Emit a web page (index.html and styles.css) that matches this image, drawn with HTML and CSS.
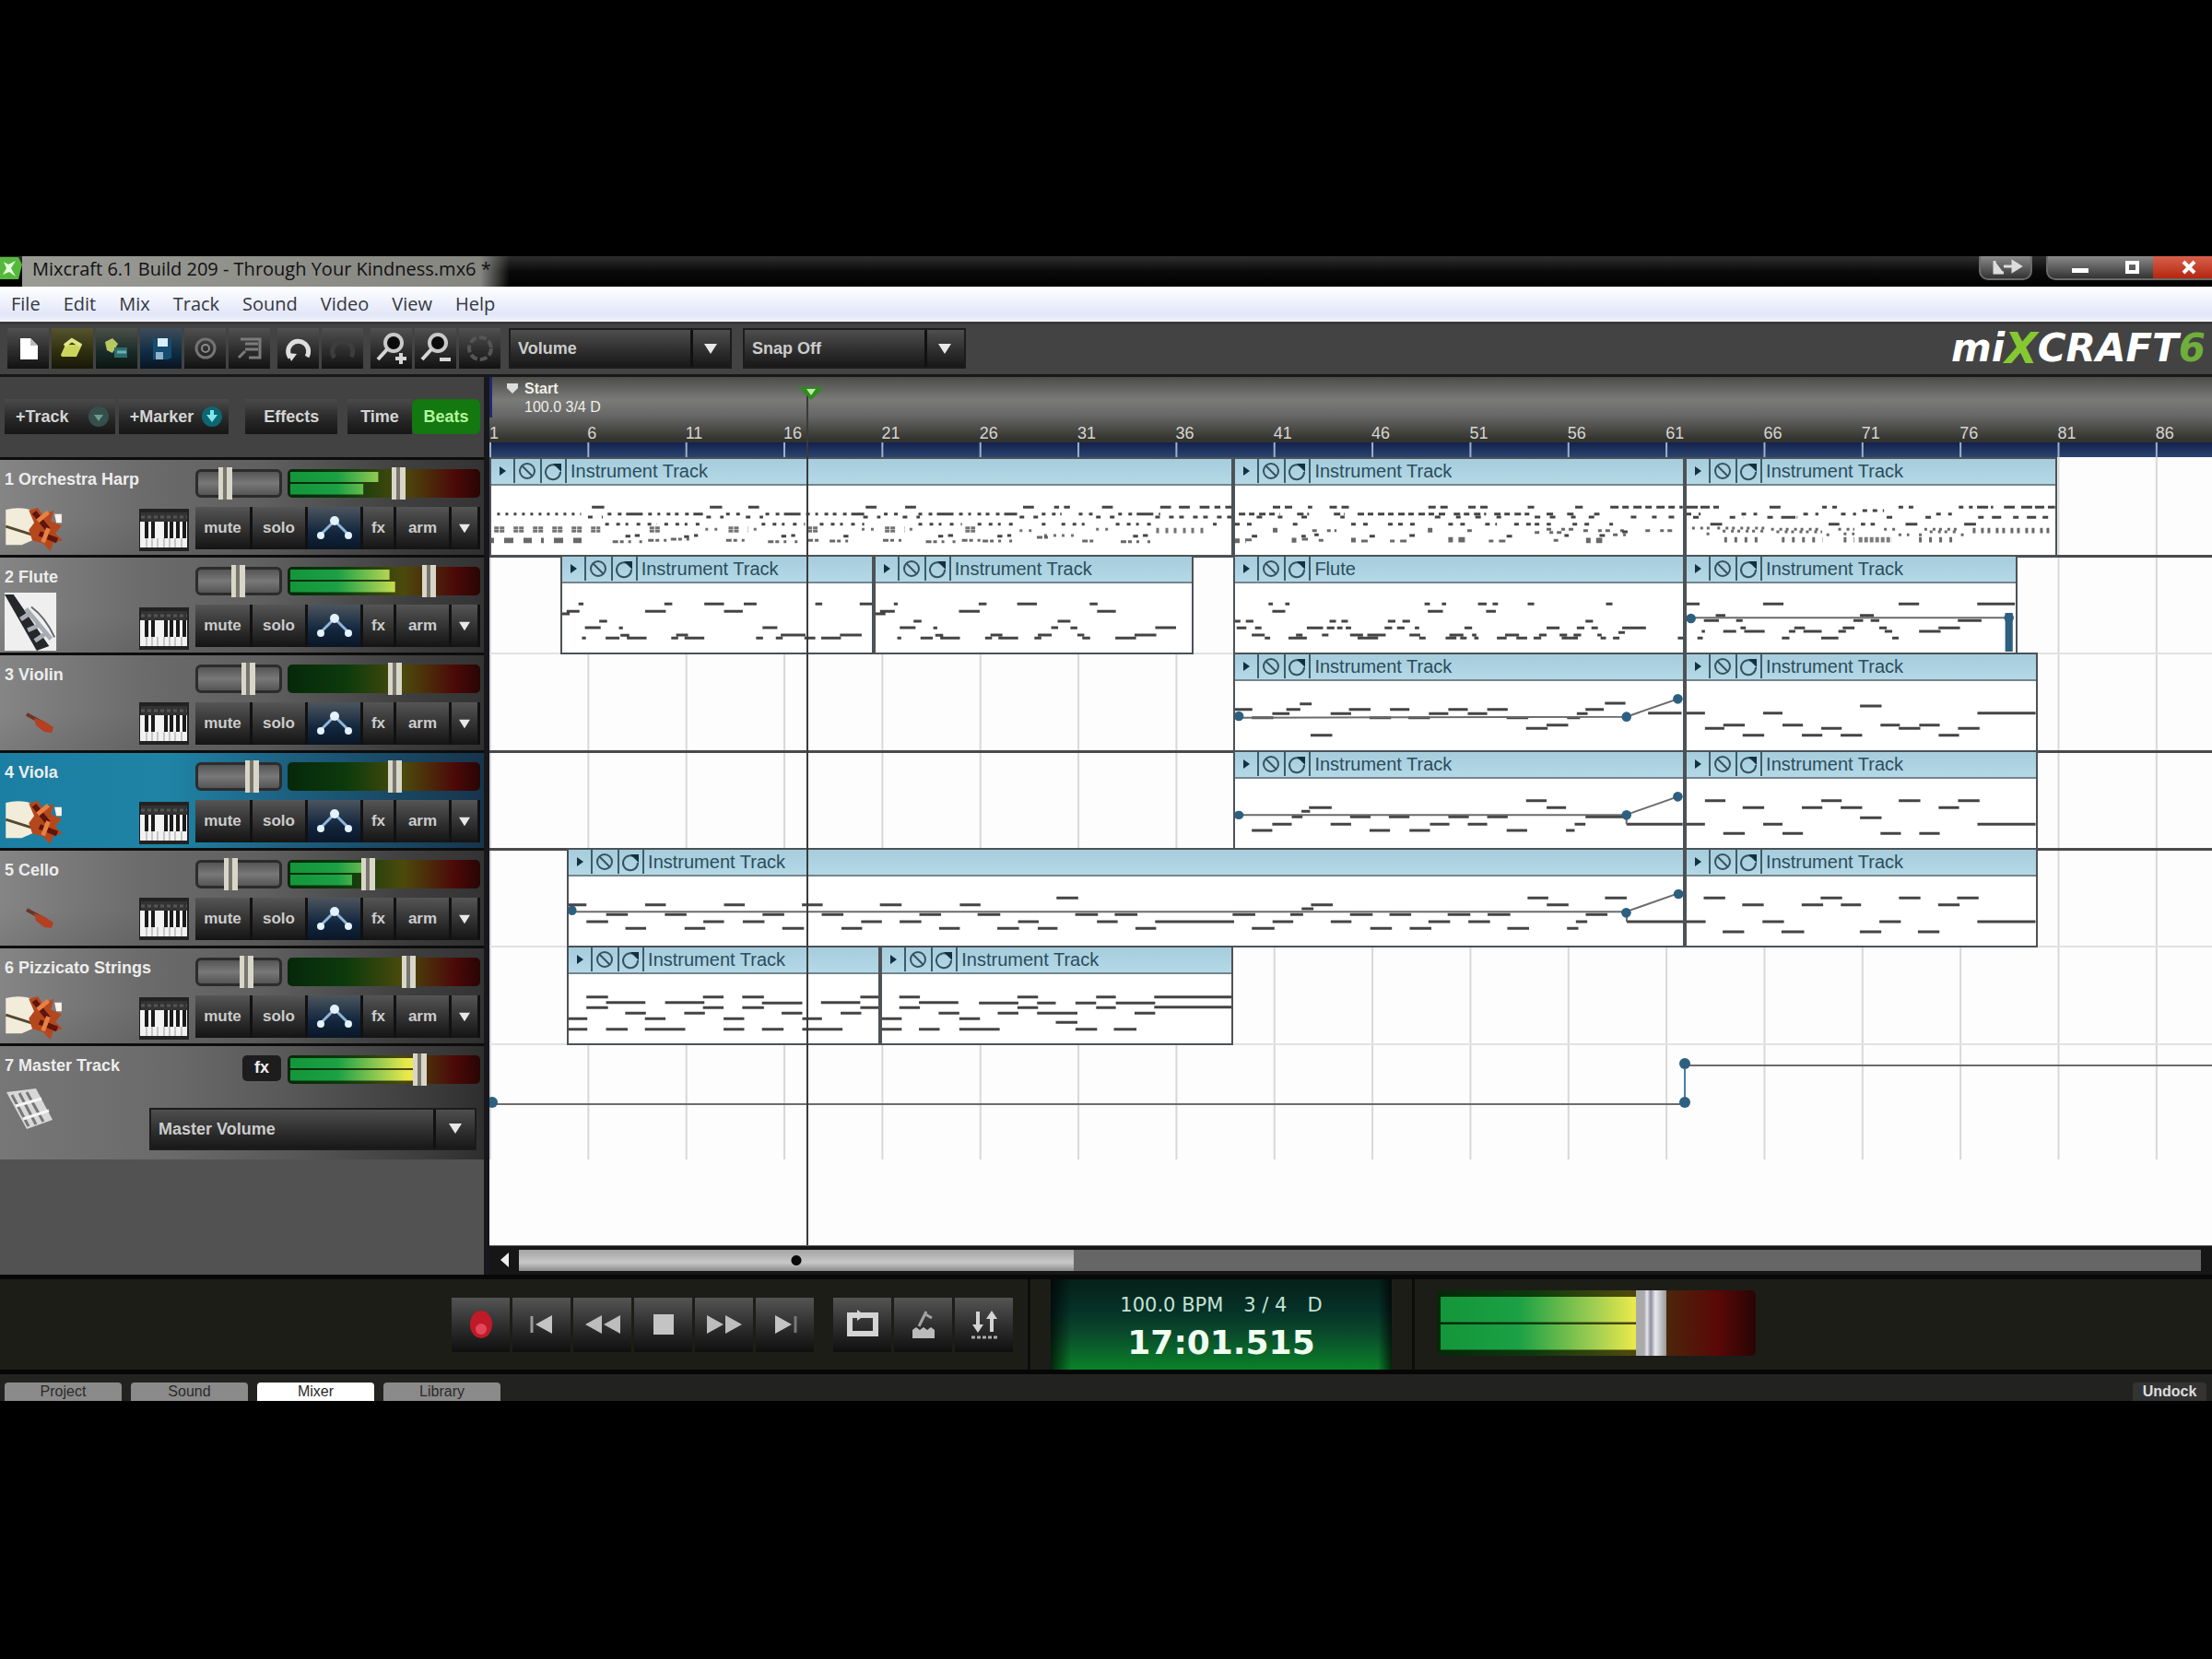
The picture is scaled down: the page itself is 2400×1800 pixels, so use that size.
FILE: index.html
```html
<!DOCTYPE html>
<html lang="en">
<head>
<meta charset="utf-8">
<title>Mixcraft 6.1 Build 209 - Through Your Kindness.mx6</title>
<link rel="stylesheet" href="styles.css">
</head>
<body>
<svg class="defs" aria-hidden="true">
  <defs>
    <symbol id="i-piano" viewBox="0 0 54 46">
      <rect width="54" height="46" fill="#222"/>
      <path d="M1 14h51v28H1z" fill="#f2f2f2"/>
      <path d="M8 14v28M14 32v10M20 32v10M27 32v10M33 32v10M39 32v10M46 32v10" stroke="#999" stroke-width="1"/>
      <path d="M8 12v20M15 12v20M29 12v20M35 12v20M42 12v20M49 12v20" stroke="#1a1a1a" stroke-width="4"/>
      <path d="M2 4h50v10H2z" fill="#333"/>
      <path d="M2 9h50" stroke="#555" stroke-width="3" stroke-dasharray="4 3"/>
    </symbol>
    <symbol id="i-nodes" viewBox="0 0 40 28">
      <path d="M5 21L20 6l15 15" fill="none" stroke="#8fb6da" stroke-width="3"/>
      <circle cx="20" cy="6" r="5" fill="#e4f2ff"/><circle cx="5" cy="22" r="4" fill="#e4f2ff"/><circle cx="35" cy="22" r="4" fill="#e4f2ff"/>
    </symbol>
    <symbol id="i-harp" viewBox="0 0 66 52">
      <path d="M0 3q18-4 32 2l4 30-18 8H0z" fill="#f2eddb"/>
      <path d="M0 22l38 12" stroke="#55482c" stroke-width="3"/>
      <path d="M26 4l10-3 6 9 12-6-3 12 12 5-7 9 8 8-10 2-4 10-8-9-12-3-4-12 6-8z" fill="#b5471d"/>
      <path d="M32 6l16 20M38 30l20 8" stroke="#5d150d" stroke-width="6"/>
      <path d="M36 16l12-10M42 40l6-16" stroke="#e78143" stroke-width="5"/>
      <path d="M55 8h8v10h-6z" fill="#fff2ea"/>
    </symbol>
    <symbol id="i-flute" viewBox="0 0 60 66">
      <path d="M0 0h58v65H0z" fill="#efefef"/>
      <path d="M0 2l10 0 40 58-14 5z" fill="#25272b"/>
      <path d="M24 18l28 34M18 30l12-8M26 42l14-6M34 54l12-8" stroke="#a9adb3" stroke-width="5"/>
      <path d="M30 16q16 12 26 34" stroke="#666" stroke-width="2" fill="none"/>
    </symbol>
    <symbol id="i-bow" viewBox="0 0 34 26">
      <path d="M2 3l22 12" stroke="#6b3527" stroke-width="4"/>
      <path d="M10 7l10 3 11 7-2 6-8-1-9-7z" fill="#b43f22"/>
    </symbol>
    <symbol id="i-desk" viewBox="0 0 54 46">
      <path d="M2 5l32-4 18 34-28 10z" fill="#d8d8d8"/>
      <path d="M8 8l18 34M16 6l18 34M24 5l18 32" stroke="#777" stroke-width="3"/>
      <path d="M12 20l28-8M20 34l28-9" stroke="#f6f6f6" stroke-width="3"/>
    </symbol>
    <symbol id="i-down" viewBox="0 0 16 14"><path d="M1 2h14L8 13z" fill="#e8e8e8"/></symbol>
    <symbol id="i-tools" viewBox="0 0 82 26">
      <path d="M9 8l7 5-7 5z" fill="#12303d"/>
      <path d="M25 0v26M54 0v26M81 0v26" stroke="#3d5c69" stroke-width="2"/>
      <circle cx="39" cy="13" r="8" fill="none" stroke="#36525f" stroke-width="2"/>
      <path d="M33 7l12 12" stroke="#36525f" stroke-width="2"/>
      <path d="M72 8a8 8 0 1 0 3 6" fill="none" stroke="#36525f" stroke-width="2"/>
      <path d="M67 5h9v9z" fill="#12303d"/>
    </symbol>
  </defs>
</svg>

<main class="app">
  <header class="titlebar">
    <svg class="app-icon" viewBox="0 0 24 26" aria-hidden="true"><path d="M0 0h20l4 8-4 16H0z" fill="#55b83c"/><path d="M4 5l5 3 8-4-5 8 5 9-7-5-7 3 4-7z" fill="#e6ffdc"/></svg>
    <h1>Mixcraft 6.1 Build 209 - Through Your Kindness.mx6 *</h1>
    <button class="win-pill" aria-label="Dock"><svg viewBox="0 0 40 18" width="40" height="18"><path d="M8 2v13h10M18 8h10M28 3l8 5-8 5z" stroke="#ddd" stroke-width="3" fill="#ddd"/></svg></button>
    <div class="win-controls">
      <button aria-label="Minimize"><svg viewBox="0 0 20 16" width="20" height="16"><path d="M1 9h18v5H1z" fill="#fff"/></svg></button>
      <button aria-label="Maximize"><svg viewBox="0 0 18 16" width="18" height="16"><path d="M3 3h11v10H3z" fill="none" stroke="#fff" stroke-width="4"/></svg></button>
      <button class="close" aria-label="Close"><svg viewBox="0 0 18 16" width="18" height="16"><path d="M3 2l12 12M15 2L3 14" stroke="#fff" stroke-width="4"/></svg></button>
    </div>
  </header>

  <nav class="menubar" aria-label="Main menu">
    <a href="#file">File</a><a href="#edit">Edit</a><a href="#mix">Mix</a><a href="#track">Track</a><a href="#sound">Sound</a><a href="#video">Video</a><a href="#view">View</a><a href="#help">Help</a>
  </nav>

  <div class="toolbar">
    <div class="tool-group">
      <button aria-label="New"><svg viewBox="0 0 30 30"><path d="M6 4h11l8 8v15H6z" fill="#fff"/><path d="M17 4v8h8" fill="#bbb"/></svg></button>
      <button class="t-olive" aria-label="Open"><svg viewBox="0 0 30 30"><path d="M2 22l5-11h18l-6 13H3z" fill="#cdd65c"/><path d="M6 12l8-6 10 6" fill="none" stroke="#dfe68a" stroke-width="4"/></svg></button>
      <button class="t-green" aria-label="Import"><svg viewBox="0 0 30 30"><path d="M2 8l8-4 6 6-6 10-6-3z" fill="#b9c763"/><path d="M12 14h14v11H12z" fill="#2c6c6d"/><path d="M15 19h10" stroke="#6fb0b5" stroke-width="3"/></svg></button>
      <button class="t-blue" aria-label="Save"><svg viewBox="0 0 30 30"><path d="M6 4h20v21l-4 2H6z" fill="#174c71"/><path d="M11 4h11v9H11z" fill="#d9eefb"/><path d="M9 19h8v8H9z" fill="#8fb4ca"/></svg></button>
      <button aria-label="Burn"><svg viewBox="0 0 30 30"><circle cx="15" cy="15" r="10" fill="none" stroke="#747474" stroke-width="3"/><circle cx="15" cy="15" r="4" fill="none" stroke="#8a8a8a" stroke-width="2"/></svg></button>
      <button aria-label="Mix down"><svg viewBox="0 0 30 30"><path d="M5 5h21v20H14M10 10h14M10 16h14M3 25l7-7" fill="none" stroke="#7b7b7b" stroke-width="3"/></svg></button>
    </div>
    <div class="tool-group">
      <button aria-label="Undo"><svg viewBox="0 0 30 30"><path d="M6 25A11 11 0 1 1 24 24" fill="none" stroke="#dedede" stroke-width="5"/><path d="M3 20l10 1-6 8z" fill="#dedede"/></svg></button>
      <button aria-label="Redo"><svg viewBox="0 0 30 30"><path d="M6 25A11 11 0 1 1 24 24" fill="none" stroke="#3d3d3d" stroke-width="5"/></svg></button>
    </div>
    <div class="tool-group zooms">
      <button aria-label="Zoom in"><svg viewBox="0 0 36 36"><circle cx="20" cy="12" r="9" fill="#0c0c0c" stroke="#c9c9c9" stroke-width="4"/><path d="M13 19L3 30M22 29h12M28 23v12" stroke="#d6d6d6" stroke-width="4"/></svg></button>
      <button aria-label="Zoom out"><svg viewBox="0 0 36 36"><circle cx="20" cy="12" r="9" fill="#0c0c0c" stroke="#c9c9c9" stroke-width="4"/><path d="M13 19L3 30M22 30h12" stroke="#d6d6d6" stroke-width="4"/></svg></button>
      <button aria-label="Preferences"><svg viewBox="0 0 36 36"><circle cx="18" cy="18" r="12" fill="none" stroke="#555" stroke-width="4" stroke-dasharray="8 3"/></svg></button>
    </div>
    <label class="combo"><select aria-label="Automation"><option>Volume</option></select><svg><use href="#i-down"/></svg></label>
    <label class="combo"><select aria-label="Snap"><option>Snap Off</option></select><svg><use href="#i-down"/></svg></label>
    <div class="logo" role="img" aria-label="Mixcraft 6"><span>mi</span><b>X</b><span>CRAFT</span><i>6</i></div>
  </div>

  <div class="workspace">
    <aside class="panel">
      <div class="panel-tools">
        <button class="add dim">+Track <svg viewBox="0 0 24 24"><circle cx="12" cy="12" r="11" fill="#35504c"/><path d="M7 10h10l-5 7z" fill="#6f9b92"/></svg></button>
        <button class="add">+Marker <svg viewBox="0 0 24 24"><circle cx="12" cy="12" r="11" fill="#0d6670"/><path d="M10 5h4v5h4l-6 8-6-8h4z" fill="#7fe6ec"/></svg></button>
        <button class="effects">Effects</button>
        <div class="toggle"><button>Time</button><button class="on">Beats</button></div>
      </div>

      <section class="track">
        <h2>1 Orchestra Harp</h2>
        <input class="pan" type="range" value="30" aria-label="Pan, track 1">
        <div class="meter"><i style="--level:47%"></i><i style="--level:39%"></i><input type="range" value="58" aria-label="Volume, track 1"></div>
        <svg class="pic"><use href="#i-harp"/></svg>
        <button class="piano" aria-label="Instrument"><svg><use href="#i-piano"/></svg></button>
        <div class="strip"><button>mute</button><button>solo</button><button class="auto" aria-label="Automation"><svg><use href="#i-nodes"/></svg></button><button>fx</button><button>arm</button><button aria-label="More"><svg class="sm"><use href="#i-down"/></svg></button></div>
      </section>
      <section class="track">
        <h2>2 Flute</h2>
        <input class="pan" type="range" value="49" aria-label="Pan, track 2">
        <div class="meter"><i style="--level:53%"></i><i style="--level:56%"></i><input type="range" value="75" aria-label="Volume, track 2"></div>
        <svg class="pic flute"><use href="#i-flute"/></svg>
        <button class="piano" aria-label="Instrument"><svg><use href="#i-piano"/></svg></button>
        <div class="strip"><button>mute</button><button>solo</button><button class="auto" aria-label="Automation"><svg><use href="#i-nodes"/></svg></button><button>fx</button><button>arm</button><button aria-label="More"><svg class="sm"><use href="#i-down"/></svg></button></div>
      </section>
      <section class="track">
        <h2>3 Violin</h2>
        <input class="pan" type="range" value="64" aria-label="Pan, track 3">
        <div class="meter"><i style="--level:0%"></i><i style="--level:0%"></i><input type="range" value="56" aria-label="Volume, track 3"></div>
        <svg class="pic bow"><use href="#i-bow"/></svg>
        <button class="piano" aria-label="Instrument"><svg><use href="#i-piano"/></svg></button>
        <div class="strip"><button>mute</button><button>solo</button><button class="auto" aria-label="Automation"><svg><use href="#i-nodes"/></svg></button><button>fx</button><button>arm</button><button aria-label="More"><svg class="sm"><use href="#i-down"/></svg></button></div>
      </section>
      <section class="track selected">
        <h2>4 Viola</h2>
        <input class="pan" type="range" value="70" aria-label="Pan, track 4">
        <div class="meter"><i style="--level:0%"></i><i style="--level:0%"></i><input type="range" value="56" aria-label="Volume, track 4"></div>
        <svg class="pic"><use href="#i-harp"/></svg>
        <button class="piano" aria-label="Instrument"><svg><use href="#i-piano"/></svg></button>
        <div class="strip"><button>mute</button><button>solo</button><button class="auto" aria-label="Automation"><svg><use href="#i-nodes"/></svg></button><button>fx</button><button>arm</button><button aria-label="More"><svg class="sm"><use href="#i-down"/></svg></button></div>
      </section>
      <section class="track">
        <h2>5 Cello</h2>
        <input class="pan" type="range" value="38" aria-label="Pan, track 5">
        <div class="meter"><i style="--level:40%"></i><i style="--level:33%"></i><input type="range" value="41" aria-label="Volume, track 5"></div>
        <svg class="pic bow"><use href="#i-bow"/></svg>
        <button class="piano" aria-label="Instrument"><svg><use href="#i-piano"/></svg></button>
        <div class="strip"><button>mute</button><button>solo</button><button class="auto" aria-label="Automation"><svg><use href="#i-nodes"/></svg></button><button>fx</button><button>arm</button><button aria-label="More"><svg class="sm"><use href="#i-down"/></svg></button></div>
      </section>
      <section class="track">
        <h2>6 Pizzicato Strings</h2>
        <input class="pan" type="range" value="61" aria-label="Pan, track 6">
        <div class="meter"><i style="--level:0%"></i><i style="--level:0%"></i><input type="range" value="64" aria-label="Volume, track 6"></div>
        <svg class="pic"><use href="#i-harp"/></svg>
        <button class="piano" aria-label="Instrument"><svg><use href="#i-piano"/></svg></button>
        <div class="strip"><button>mute</button><button>solo</button><button class="auto" aria-label="Automation"><svg><use href="#i-nodes"/></svg></button><button>fx</button><button>arm</button><button aria-label="More"><svg class="sm"><use href="#i-down"/></svg></button></div>
      </section>
      <section class="track master">
        <h2>7 Master Track</h2>
        <button class="fx">fx</button>
        <div class="meter"><i style="--level:66%"></i><i style="--level:66%"></i><input type="range" value="70" aria-label="Master volume"></div>
        <svg class="pic desk"><use href="#i-desk"/></svg>
        <label class="combo"><select aria-label="Master automation"><option>Master Volume</option></select><svg><use href="#i-down"/></svg></label>
      </section>
    </aside>

    <section class="timeline">
      <div class="ruler">
        <div class="marker"><svg viewBox="0 0 14 14"><path d="M1 2h12v5L7 13 1 7z" fill="#ddd"/></svg><p><b>Start</b><br>100.0 3/4 D</p></div>
        <ol class="bars"><li>1</li><li>6</li><li>11</li><li>16</li><li>21</li><li>26</li><li>31</li><li>36</li><li>41</li><li>46</li><li>51</li><li>56</li><li>61</li><li>66</li><li>71</li><li>76</li><li>81</li><li>86</li></ol>
      </div>
      <div class="ticks"></div>

      <div class="lanes">
        <div class="lane dark">
          <article class="clip" style="left:0%;width:43.2%"><h3><svg><use href="#i-tools"/></svg>Instrument Track</h3>
            <svg class="notes" viewBox="24 138 1501 222" preserveAspectRatio="none">
              <path d="M228 208h25M467 208h25M545 208h22M783 208h22M863 208h22M1102 208h22M1165 208h10M1185 208h12M1262 208h22M1380 208h22M1418 208h22M1460 208h20M1490 208h12M1512 208h14"/>
              <path stroke-dasharray="3 6" d="M36 230h170"/>
              <path stroke-dasharray="4 7 4 5 18 6 4 6 3 7 4 5" d="M260 230h193M500 230h30M580 230h200M820 230h30M890 230h200M1140 230h40M1215 230h35M1295 230h85"/>
              <path stroke-dasharray="5 10 5 6" d="M220 240h30M460 240h35M540 240h35M778 240h35M858 240h35M1095 240h40M1250 240h40M1370 240h155"/>
              <path stroke-dasharray="4 8 4 6 3 9" d="M255 263h105M375 263h85M572 263h88M690 263h90M890 263h88M1010 263h85M1140 263h20M1180 263h60M1290 263h85M1487 263h8"/>
              <path stroke-dasharray="5 1 5 10" stroke-opacity=".75" d="M30 275h215M30 286h215M345 275h26M345 286h26M505 275h40M505 286h40M665 275h25M665 286h25M822 275h40M822 286h40M985 275h20M985 286h20"/>
              <path stroke-dasharray="3 7 3 6" stroke-opacity=".75" d="M458 280h30M556 280h8M775 280h28M872 280h10M1095 284h30M1145 300h70M1250 280h30M1372 280h105M1372 288h105"/>
              <path stroke-dasharray="3 11 10 11 9 10" stroke-opacity=".8" d="M24 312h195M24 320h195"/>
              <path stroke-dasharray="6 2 4 5 3 9 3 6" stroke-opacity=".8" d="M270 320h60M342 316h50M388 312h50M500 316h38M585 320h60M665 316h30M710 318h50M818 316h38M905 320h60M978 316h50M1020 318h60M1130 306h30M1222 318h26M1300 320h60"/>
              <path d="M296 302h10M315 300h10M415 304h10M435 300h8M612 302h10M632 300h8M738 302h10M930 302h10M950 300h10M1050 302h10M1070 300h8M1325 302h10M1345 300h10"/>
            </svg></article>
          <article class="clip" style="left:43.2%;width:26.2%"><h3><svg><use href="#i-tools"/></svg>Instrument Track</h3>
            <svg class="notes" viewBox="35 138 829 222" preserveAspectRatio="none">
              <path stroke-dasharray="8 5 8 24" d="M105 208h38M210 208h40M393 208h38M467 208h38"/>
              <path d="M170 208h8M577 208h12M665 208h14"/>
              <path stroke-dasharray="9 4 7 5" d="M730 208h134"/>
              <path stroke-dasharray="7 4 6 5" d="M42 230h76M150 230h22M218 230h20M262 230h165M440 230h60M515 230h65M612 230h12M650 230h14M700 230h10"/>
              <path stroke-dasharray="6 17 5 13" d="M75 240h50M158 240h12M230 240h8M405 240h60M480 240h50M590 240h12M618 240h60M690 240h14M768 240h95"/>
              <path stroke-dasharray="5 8 5 22 5 6" d="M35 263h55M142 263h10M250 263h130M430 263h90M552 263h60M590 263h30M660 263h75"/>
              <path stroke-dasharray="5 11 4 4" stroke-opacity=".8" d="M105 280h10M178 284h45M392 280h14M465 284h20M590 290h60M612 280h60M680 284h80M795 284h50M105 286h10M392 286h14"/>
              <path stroke-dasharray="5 6 7 22" stroke-opacity=".8" d="M35 314h40M35 320h20M140 312h30M140 319h14M190 316h14M250 318h45M250 312h10M322 318h45M430 310h38M430 318h38M505 318h40M625 316h14M685 312h30M685 320h30M735 298h24"/>
              <path d="M66 302h10M158 302h8M182 298h8M284 302h10M358 300h10M538 302h10M645 300h8M710 300h10M752 288h10"/>
            </svg></article>
          <article class="clip" style="left:69.4%;width:21.6%"><h3><svg><use href="#i-tools"/></svg>Instrument Track</h3>
            <svg class="notes" viewBox="868 138 685 222" preserveAspectRatio="none">
              <path stroke-dasharray="12 3 10 4" d="M868 208h60M1022 208h22M1408 208h30M1458 208h20M1490 208h63"/>
              <path stroke-dasharray="5 6" d="M1120 208h28M1262 208h30M1374 208h26M1195 219h40"/>
              <path stroke-dasharray="5 8 4 5" d="M868 230h26M970 230h34M1085 230h28M1155 230h28M1332 230h30"/>
              <path stroke-dasharray="6 9 10 7" d="M880 241h24M948 241h26M1018 241h56M1060 241h20M1240 241h24M1312 241h24M1410 241h50M1475 241h78"/>
              <path d="M912 263h22M1132 263h20M1192 263h8M1210 263h8M1275 263h22M1384 263h22"/>
              <path stroke-dasharray="3 6 3 4" stroke-opacity=".8" d="M878 276h36M925 276h90M935 286h80M1025 280h95M1035 288h85M1150 280h30M1235 280h26M1310 280h60M1320 288h50M1400 280h152M1400 288h152M905 295h10M1128 298h12M1160 295h20M1262 298h20M1300 298h12M1378 298h12"/>
              <path stroke-dasharray="3 8" stroke-opacity=".8" d="M938 310h74M938 318h74M1045 310h76M1045 318h76M1160 310h20M1160 318h20M1300 310h74M1300 318h74"/>
              <path stroke-opacity=".7" stroke-dasharray="4 2" d="M1188 310h62M1188 318h62"/>
            </svg></article>
        </div>

        <div class="lane">
          <article class="clip" style="left:4.1%;width:18.2%"><h3><svg><use href="#i-tools"/></svg>Instrument Track</h3>
            <svg class="notes" viewBox="167 456 628 222" preserveAspectRatio="none"><path d="M166 555h16M176 547h26M200 523h10M207 634h8M213 600h32M242 579h16M255 634h28M282 601h8M285 625h18M298 634h40M335 547h42M374 523h16M388 634h14M398 624h24M415 634h40M455 523h40M495 547h38M535 523h26M560 634h14M573 600h30M600 634h14M610 624h50M658 634h22M692 634h40M730 624h44M680 523h14M770 523h25"/></svg></article>
          <article class="clip" style="left:22.3%;width:18.6%"><h3><svg><use href="#i-tools"/></svg>Instrument Track</h3>
            <svg class="notes" viewBox="801 456 642 222" preserveAspectRatio="none"><path d="M801 555h20M810 547h30M838 523h8M845 634h8M850 600h32M878 579h16M892 634h25M918 601h8M922 625h16M932 634h40M970 547h42M1010 523h16M1023 634h14M1034 624h24M1050 634h40M1088 523h40M1123 634h14M1130 624h28M1157 600h14M1170 579h26M1196 601h14M1210 624h14M1220 634h16M1235 523h16M1250 547h38M1287 634h42M1326 624h44M1368 600h42"/></svg></article>
          <article class="clip" style="left:43.2%;width:26.2%"><h3><svg><use href="#i-tools"/></svg>Flute</h3>
            <svg class="notes" viewBox="35 456 829 222" preserveAspectRatio="none"><path d="M35 579h10M55 579h14M38 601h18M72 601h12M66 624h24M90 634h10M97 523h8M104 547h24M128 523h8M134 634h34M148 624h12M168 601h30M196 624h12M210 579h12M232 579h12M205 601h14M224 601h10M240 601h10M248 624h24M262 634h38M280 624h24M300 624h14M312 601h14M318 579h14M345 579h14M335 601h14M368 601h8M358 624h20M376 634h12M386 523h10M392 547h28M418 523h8M425 634h20M432 624h26M460 601h14M452 634h12M474 624h8M478 634h8M485 523h16M512 523h10M500 547h18M520 634h18M535 624h26M556 634h20M577 523h12M588 634h14M598 624h14M612 601h24M636 624h14M640 634h30M662 624h14M668 601h14M684 579h14M695 601h12M706 624h8M712 634h10M722 523h12M735 634h12M745 616h12M752 601h44M855 634h10"/></svg></article>
          <article class="clip" style="left:69.4%;width:19.3%"><h3><svg><use href="#i-tools"/></svg>Instrument Track</h3>
            <svg class="notes" viewBox="868 456 611 222" preserveAspectRatio="none"><path d="M868 523h24M1010 523h38M1262 523h38M1408 523h70M888 634h10M896 612h6M900 577h28M922 560h18M960 577h12M936 612h24M968 601h10M975 612h38M1045 634h14M1058 612h12M1068 601h20M1085 612h34M1118 634h32M1150 612h14M1158 601h22M1178 577h18M1190 560h26M1210 577h16M1226 601h14M1236 612h14M1250 634h12M1300 612h40M1336 601h40M1372 577h44"/><path class="env" d="M875 568H1468"/><path d="M1460 552h14v126h-14z" class="dot"/><ellipse class="dot" cx="876" cy="570" rx="9" ry="16"/><ellipse class="dot" cx="1467" cy="568" rx="9" ry="16"/></svg></article>
        </div>

        <div class="lane dark">
          <article class="clip" style="left:43.2%;width:26.2%"><h3><svg><use href="#i-tools"/></svg>Instrument Track</h3>
            <svg class="notes" viewBox="35 774 829 222" preserveAspectRatio="none"><path d="M35 866h32M66 893h40M104 880h32M130 866h26M155 848h22M175 950h40M212 880h38M246 866h40M284 893h40M322 866h36M356 893h40M394 880h36M430 866h36M466 880h36M502 866h38M538 893h40M574 928h40M612 917h40M650 893h24M668 880h20M684 866h34M720 846h38M800 878h62"/><path class="env" d="M40 893L760 890L855 832"/><ellipse class="dot" cx="42" cy="888" rx="9" ry="16"/><ellipse class="dot" cx="760" cy="890" rx="9" ry="16"/><ellipse class="dot" cx="855" cy="832" rx="9" ry="16"/></svg></article>
          <article class="clip" style="left:69.4%;width:20.5%"><h3><svg><use href="#i-tools"/></svg>Instrument Track</h3>
            <svg class="notes" viewBox="868 774 649 222" preserveAspectRatio="none"><path d="M868 878h34M1010 878h36M1190 855h40M1408 878h108M902 928h36M936 917h40M972 950h40M1046 917h38M1082 950h38M1118 928h38M1154 950h40M1228 917h36M1262 928h40M1300 917h38M1336 950h38M1372 928h40"/></svg></article>
        </div>

        <div class="lane dark">
          <article class="clip" style="left:43.2%;width:26.2%"><h3><svg><use href="#i-tools"/></svg>Instrument Track</h3>
            <svg class="notes" viewBox="35 1092 829 222" preserveAspectRatio="none"><path d="M66 1260h38M104 1240h36M140 1216h20M158 1198h16M172 1186h42M212 1240h38M248 1216h38M284 1260h38M320 1216h38M358 1260h38M396 1240h36M430 1216h38M466 1240h36M502 1216h38M538 1260h38M574 1163h38M612 1186h36M648 1260h16M664 1240h20M684 1216h74M760 1240h104"/><path class="env" d="M40 1210H758L855 1150M760 1210v30"/><ellipse class="dot" cx="42" cy="1210" rx="9" ry="14"/><ellipse class="dot" cx="760" cy="1210" rx="9" ry="16"/><ellipse class="dot" cx="855" cy="1150" rx="9" ry="16"/></svg></article>
          <article class="clip" style="left:69.4%;width:20.5%"><h3><svg><use href="#i-tools"/></svg>Instrument Track</h3>
            <svg class="notes" viewBox="868 1092 649 222" preserveAspectRatio="none"><path d="M868 1240h34M902 1163h38M936 1270h40M972 1186h40M1010 1240h36M1046 1270h38M1082 1186h38M1118 1163h38M1154 1186h40M1190 1219h40M1228 1270h38M1262 1163h40M1300 1270h38M1336 1186h38M1372 1163h40M1408 1240h108"/></svg></article>
        </div>

        <div class="lane">
          <article class="clip" style="left:4.5%;width:64.9%"><h3><svg><use href="#i-tools"/></svg>Instrument Track</h3>
            <svg class="notes" viewBox="179 150 2259 222" preserveAspectRatio="none"><path d="M179 242h36M215 297h44M255 274h44M294 319h42M334 242h42M374 274h44M414 319h42M452 297h42M494 242h42M532 297h44M572 274h44M612 319h44M652 242h42M692 274h44M732 319h42M772 297h42M810 242h44M850 297h44M890 274h44M930 319h42M972 242h42M1008 274h46M1048 319h44M1090 297h42M1130 319h40M1168 220h44M1206 274h46M1250 297h42M1286 274h46M1328 319h42M1368 297h160M1525 274h46M1564 319h46M1606 297h42M1642 274h26M1665 255h24M1684 242h44M1724 297h42M1763 274h46M1804 319h44M1843 274h44M1884 319h44M1922 297h44M1961 274h46M2003 297h44M2042 274h46M2082 319h44M2123 220h42M2162 242h44M2203 319h23M2221 297h23M2241 274h44M2280 220h44M2324 297h114"/><path class="env" d="M185 265H2322L2428 205M2324 265v32"/><ellipse class="dot" cx="186" cy="260" rx="9" ry="16"/><ellipse class="dot" cx="2323" cy="268" rx="10" ry="16"/><ellipse class="dot" cx="2429" cy="207" rx="10" ry="16"/></svg></article>
          <article class="clip" style="left:69.4%;width:20.5%"><h3><svg><use href="#i-tools"/></svg>Instrument Track</h3>
            <svg class="notes" viewBox="740 150 553 222" preserveAspectRatio="none"><path d="M740 297h30M767 220h34M797 330h34M828 242h34M860 297h34M890 330h36M922 242h34M952 220h34M984 242h32M1014 330h34M1045 297h34M1076 220h34M1106 330h34M1138 242h34M1168 220h34M1200 297h92"/></svg></article>
        </div>

        <div class="lane">
          <article class="clip" style="left:4.5%;width:18.2%"><h3><svg><use href="#i-tools"/></svg>Instrument Track</h3>
            <svg class="notes" viewBox="179 468 630 222" preserveAspectRatio="none"><path d="M215 542h44M215 577h44M255 560h80M375 560h80M452 542h42M452 577h42M532 542h44M532 577h44M572 562h82M692 560h80M772 542h40M772 577h40M294 595h42M414 595h42M612 595h42M732 595h42M179 613h38M334 613h42M494 613h42M654 613h40M179 647h38M255 647h44M334 647h82M494 647h42M572 647h44M654 647h82"/></svg></article>
          <article class="clip" style="left:22.7%;width:20.5%"><h3><svg><use href="#i-tools"/></svg>Instrument Track</h3>
            <svg class="notes" viewBox="815 468 710 222" preserveAspectRatio="none"><path d="M815 613h40M815 647h40M850 542h42M850 577h42M890 560h80M930 595h42M890 647h42M972 613h42M972 647h82M1012 562h80M1050 595h42M1090 542h42M1090 577h42M1130 562h38M1130 595h82M1168 625h44M1208 562h42M1208 647h44M1250 542h40M1250 577h40M1290 562h80M1286 647h46M1328 595h42M1368 542h158M1368 575h158"/></svg></article>
        </div>

        <div class="lane master-lane">
          <svg class="master-env" viewBox="0 0 1869 126" preserveAspectRatio="none"><path class="env" d="M0 66H1297M1297 24H1869"/><path class="link" d="M1297 24v42"/><ellipse class="dot" cx="3" cy="64" rx="6" ry="6"/><ellipse class="dot" cx="1297" cy="64" rx="6" ry="6"/><ellipse class="dot" cx="1297" cy="22" rx="6" ry="6"/></svg>
        </div>
      </div>
      <div class="blank"></div>
      <div class="scroll">
        <button aria-label="Scroll left"><svg viewBox="0 0 12 18"><path d="M11 1v16L2 9z" fill="#eee"/></svg></button>
        <div class="rail"><div class="thumb"></div></div>
      </div>
      <div class="playhead"><svg viewBox="0 0 30 18"><path d="M1 3h28L15 17z" fill="#2f8a22"/><path d="M10 5h10l-5 7z" fill="#b9ef9c"/></svg></div>
    </section>
  </div>

  <footer class="transport">
    <div class="decks">
      <div class="keys">
        <button aria-label="Record"><svg viewBox="0 0 30 32"><ellipse cx="15" cy="16" rx="12" ry="15" fill="#c01a28"/><ellipse cx="15" cy="21" rx="6" ry="6" fill="#e0485a"/></svg></button>
        <button aria-label="To start"><svg viewBox="0 0 30 24"><path d="M4 3v18" stroke="#999" stroke-width="3"/><path d="M26 2v20L8 12z" fill="#c4c4c4"/></svg></button>
        <button aria-label="Rewind"><svg class="w" viewBox="0 0 42 24"><path d="M20 2v20L2 12zM40 2v20L22 12z" fill="#bdbdbd"/></svg></button>
        <button aria-label="Stop"><svg viewBox="0 0 30 24"><path d="M4 1h22v22H4z" fill="#c4c4c4"/></svg></button>
        <button aria-label="Forward"><svg class="w" viewBox="0 0 42 24"><path d="M2 2v20l18-10zM22 2v20l18-10z" fill="#bdbdbd"/></svg></button>
        <button aria-label="To end"><svg viewBox="0 0 30 24"><path d="M4 2v20l18-10z" fill="#c4c4c4"/><path d="M26 3v18" stroke="#777" stroke-width="3"/></svg></button>
      </div>
      <div class="keys">
        <button aria-label="Loop"><svg class="w" viewBox="0 0 42 32"><path d="M7 6h28v20H7z" fill="none" stroke="#d4d4d4" stroke-width="6"/><path d="M15 0l8 6-8 6z" fill="#d4d4d4"/></svg></button>
        <button aria-label="Metronome"><svg viewBox="0 0 30 32"><path d="M3 31v-9l4-3 4 3 4-3 4 3 4-3 4 3v9z" fill="#bbb"/><path d="M10 18L18 2M17 5l7 4" stroke="#a2a2a2" stroke-width="3"/></svg></button>
        <button aria-label="Punch"><svg viewBox="0 0 30 32"><path d="M8 2v16M23 24V8" stroke="#d4d4d4" stroke-width="4"/><path d="M2 16h12L8 25zM17 10h12L23 1z" fill="#d4d4d4"/><path d="M1 30h28" stroke="#aaa" stroke-width="3" stroke-dasharray="4 2"/></svg></button>
      </div>
    </div>
    <div class="lcd"><p class="tempo"><span>100.0 BPM</span><span>3 / 4</span><span>D</span></p><p class="clock">17:01.515</p></div>
    <div class="main-meter"><div class="meter big"><i style="--level:65%"></i><i style="--level:65%"></i><input type="range" value="69" aria-label="Output level"></div></div>
  </footer>

  <nav class="tabs" aria-label="Panels">
    <button>Project</button><button>Sound</button><button class="on">Mixer</button><button>Library</button>
    <button class="undock">Undock</button>
  </nav>
</main>
</body>
</html>
```
FILE: styles.css
```css
* { box-sizing: border-box; margin: 0; padding: 0; }
body {
  min-height: 100vh;
  display: flex;
  flex-direction: column;
  justify-content: center;
  padding-bottom: 3px;
  background: #000;
  color: #eee;
  font-family: "Liberation Sans", Arial, sans-serif;
  font-size: 18px;
}
button, select, input { font: inherit; color: inherit; border: 0; background: none; }
h1, h2, h3 { font-size: inherit; font-weight: normal; }
a { color: inherit; text-decoration: none; }
svg { display: block; }
.defs { position: absolute; width: 0; height: 0; }
.app { width: 100%; overflow: hidden; }

/* window frame */
.titlebar {
  height: 33px;
  display: flex;
  align-items: flex-start;
  background: linear-gradient(#2e2e2e, #0a0a0a 50%, #000);
  font-family: "Open Sans", sans-serif;
  font-size: 20px;
  color: #111;
}
.app-icon { width: 24px; height: 28px; }
.titlebar h1 {
  height: 33px;
  line-height: 28px;
  padding: 0 20px 0 11px;
  margin-right: auto;
  background: linear-gradient(90deg, #9b9b96, #868681 94%, transparent);
  white-space: nowrap;
}
.win-pill, .win-controls { height: 26px; border-radius: 0 0 10px 10px; background: linear-gradient(#8a8a8a, #333); border: 2px solid #6a6a6a; border-top: 0; }
.win-pill { width: 58px; margin-right: 15px; display: grid; place-items: center; }
.win-controls { width: 180px; display: flex; border-right: 0; border-bottom-right-radius: 0; }
.win-controls button { width: 44px; display: grid; place-items: center; }
.win-controls button:first-child { width: 70px; }
.win-controls .close { flex: 1; background: linear-gradient(#d8604c, #b5260f); }
.win-controls .close svg { margin-left: 14px; }
.menubar {
  height: 38px;
  display: flex;
  gap: 1px;
  align-items: center;
  background: linear-gradient(#fff, #f0f3fd 40%, #e2e6f7 80%, #f2f4fc);
  color: #34383f;
  font: 20px "Open Sans", sans-serif;
}
.menubar a { padding: 0 12px; }

/* toolbar */
.toolbar {
  height: 60px;
  display: flex;
  align-items: center;
  padding: 0 7px 2px 8px;
  background: #434343;
  border-top: 3px solid #383838;
  border-bottom: 3px solid #181818;
}
.tool-group { display: flex; gap: 3px; margin-right: 8px; }
.tool-group:nth-child(2) { margin-right: 8px; }
.tool-group.zooms { margin-right: 9px; }
.tool-group button { width: 45px; height: 44px; display: grid; place-items: center; background: linear-gradient(#505050, #2a2a2a 60%, #121212); }
.tool-group svg { width: 30px; height: 30px; }
.zooms svg { width: 38px; height: 36px; }
.tool-group .t-olive { background: linear-gradient(#54542e, #2e2e0c 60%, #17170a); }
.tool-group .t-green { background: linear-gradient(#4c504a, #182a26 60%, #0c1410); }
.tool-group .t-blue { background: linear-gradient(#3e4d5a, #0e2c44 60%, #0a1420); }
.combo { position: relative; display: block; width: 242px; height: 44px; margin-right: 12px; }
.combo select {
  appearance: none;
  width: 100%;
  height: 100%;
  padding: 0 8px;
  background: linear-gradient(90deg, transparent 195px, #111 195px, #111 198px, transparent 198px), linear-gradient(#4e4e4e, #2c2c2c 60%, #181818);
  border: 2px solid #1c1c1c;
  font-weight: bold;
  color: #ccc;
}
.combo svg { position: absolute; right: 15px; top: 15px; width: 16px; height: 14px; pointer-events: none; }
.logo { margin-left: auto; display: flex; align-items: center; font: italic bold 42px/46px "DejaVu Sans", sans-serif; color: #fff; }
.logo b { color: #86c832; font-size: 46px; }
.logo i { color: #6fae3a; }

/* layout of tracks and timeline */
.workspace { display: grid; grid-template-columns: 531px 1fr; border-bottom: 5px solid #080808; }
.panel { background: #525252; border-right: 6px solid #17171c; }
.panel-tools { height: 87px; display: flex; align-items: center; padding: 0 0 0 5px; background: #424242; font-weight: bold; }
.panel-tools > * { height: 38px; margin-right: 4px; }
.panel-tools button { background: linear-gradient(#4a4a4a, #262626 60%, #161616); color: #d4d4d4; }
.panel-tools .add { width: 122px; display: flex; align-items: center; justify-content: space-between; padding: 0 6px 0 12px; }
.panel-tools .add svg { width: 24px; height: 24px; }
.panel-tools .effects { width: 102px; margin: 0 11px 0 14px; }
.toggle { display: flex; }
.toggle button { width: 70px; }
.toggle .on { width: 74px; border-radius: 6px; background: #12780f; color: #b4f59c; }

.track {
  height: 106px;
  display: grid;
  grid-template: 41px 1fr / 146px 61px 94px 1fr;
  padding: 10px 4px 9px 5px;
  border-top: 3px solid #0d0d0d;
  background: linear-gradient(transparent 60%, rgba(0,0,0,.08)), linear-gradient(90deg, #858585, #6b6b6b 30%, #5f5f5f 55%, #3e3e3e 85%, #333);
}
.track.selected { background: linear-gradient(90deg, #1b7fa3, #1f83a6 35%, #1d5f80 60%, #17344c); }
.track h2 { grid-column: 1 / 3; font-weight: bold; line-height: 22px; color: #ededed; }
.pan { appearance: none; width: 94px; height: 31px; border: 3px solid #2c2c2c; border-radius: 6px; background: linear-gradient(#555, #787878 50%, #555); }
.pan::-webkit-slider-thumb, .meter input::-webkit-slider-thumb {
  appearance: none;
  width: 15px;
  height: 35px;
  background: linear-gradient(90deg, #d8d6c8 5px, #77756c 5px, #77756c 9px, #d8d6c8 9px);
}
.meter {
  position: relative;
  height: 31px;
  margin-left: 6px;
  padding: 3px;
  display: flex;
  flex-direction: column;
  gap: 2px;
  border-radius: 5px;
  background: linear-gradient(90deg, #06280a, #0c3a0c 30%, #4c4a0c 60%, #4c240a 76%, #4d0a08 86%, #280505);
}
.meter i { flex: 1; background: linear-gradient(90deg, #14963a, #1ba045 25%, #a4cf52 50%, #e8e84a 62%, #fcfc3c); clip-path: inset(0 calc(100% - var(--level)) 0 0); }
.meter input { appearance: none; position: absolute; inset: 0; width: 100%; height: 100%; background: none; }
.pic { width: 66px; height: 50px; align-self: center; }
.pic.flute { width: 58px; height: 66px; margin: -14px 0 0; }
.pic.bow { width: 34px; height: 26px; margin-left: 22px; }
.piano svg { width: 54px; height: 46px; }
.strip { grid-column: 3 / 5; display: grid; grid-template-columns: 62px 60px 60px 36px 60px 1fr; height: 46px; }
.strip button { border-right: 3px solid #111; background: linear-gradient(#555, #303030 55%, #141414); display: grid; place-items: center; font-size: 17px; font-weight: bold; color: #ccc; }
.strip .auto { background: linear-gradient(#4c555e, #12263e 60%, #0a1626); }
.strip svg { width: 40px; height: 28px; }
.strip svg.sm { width: 14px; height: 12px; }
.track.master { height: 126px; grid-template: 47px 1fr / 157px 101px 49px 1fr; background: linear-gradient(90deg, #777, #6a6a6a 35%, #585858 60%, #3a3a3a 90%, #2e2e2e); padding-bottom: 4px; }
.master .fx { width: 42px; height: 28px; border-radius: 5px; background: #1d1d1d; font-weight: bold; }
.master .meter { margin-left: 0; }
.master h2 { grid-column: 1 / 3; }
.master .pic.desk { width: 54px; height: 46px; align-self: start; margin-top: -12px; }
.master .combo { grid-column: 2 / 5; width: auto; height: 46px; margin: 10px 4px 0 0; }
.master .combo select { background: linear-gradient(270deg, transparent 42px, #111 42px, #111 45px, transparent 45px), linear-gradient(#4e4e4e, #2c2c2c 60%, #181818); }

/* timeline */
.timeline { position: relative; min-width: 0; display: flex; flex-direction: column; background: #fdfdfd; overflow: hidden; }
.ruler { height: 71px; display: flex; flex-direction: column; justify-content: space-between; background: linear-gradient(#4c4c4a, #7a7b79 35%, #666 60%, #34342f 95%); }
.marker { display: flex; gap: 6px; padding: 3px 0 0 15px; font-size: 16px; line-height: 20px; color: #f0eee4; border-left: 3px solid #23286b; height: 44px; }
.marker svg { width: 14px; height: 18px; }
.bars { display: flex; list-style: none; font-size: 18px; line-height: 20px; color: #d6d6d0; }
.bars li { flex: 0 0 5.69%; }
.ticks { height: 16px; background: linear-gradient(90deg, #9fb0cc 2px, transparent 2px) 0 0 / 5.69% 100%, linear-gradient(#13214c, #2b4470); }
.lanes { background: linear-gradient(90deg, #d8d8d8 2px, transparent 2px) 0 0 / 5.69% 100%; }
.lane { position: relative; height: 106px; box-shadow: 0 2px #e2e2e2; }
.lane.dark { box-shadow: 0 3px #4a4a4a; }
.lane.master-lane { height: 126px; box-shadow: none; }
.clip { position: absolute; top: 0; height: 108px; display: flex; flex-direction: column; border: 2px solid #4c5256; background: #fff; overflow: hidden; }
.clip h3 { height: 29px; flex: none; display: flex; align-items: center; gap: 4px; font-size: 20px; line-height: 26px; background: linear-gradient(#a6cddd, #b4d8e6); border-bottom: 2px solid #74858e; color: #2b4d5b; white-space: nowrap; }
.clip h3 svg { width: 82px; height: 26px; flex: none; }
.notes { width: 100%; height: 74px; flex: none; }
.notes path { fill: none; stroke: #444; stroke-width: 3; vector-effect: non-scaling-stroke; }
path.env { fill: none; stroke: #6b6b6b; stroke-width: 2; vector-effect: non-scaling-stroke; }
path.link { stroke: #4a7ea0; stroke-width: 2; }
.dot, .notes path.dot { fill: #2d6080; stroke: none; }
.master-env { width: 100%; height: 126px; }
.blank { flex: 1 0 93px; }
.scroll { height: 32px; display: flex; background: #161616; padding: 4px 12px 4px 0; border-top: 1px solid #666; }
.scroll button { width: 32px; display: grid; place-items: center; }
.scroll button svg { width: 12px; height: 18px; }
.rail { flex: 1; background: #666; }
.thumb { width: 33%; height: 100%; background: radial-gradient(circle, #0a0a0a 5px, transparent 6px), linear-gradient(#a4a4a4, #c8c8c8 60%, #8c8c8c); }
.playhead { position: absolute; top: 14px; bottom: 32px; left: 18.4%; width: 2px; background: #3a3a3a; }
.playhead svg { width: 30px; height: 18px; margin: -6px 0 0 -10px; }

/* transport */
.transport { height: 103px; display: flex; background: #1d1d18; border-bottom: 5px solid #060606; }
.decks { width: 1118px; display: flex; gap: 21px; padding: 20px 0 0 490px; border-right: 3px solid #0c0c0c; }
.keys { display: flex; gap: 3px; }
.keys button { width: 63px; height: 59px; display: grid; place-items: center; background: linear-gradient(#545454, #2c2c2c 55%, #0f0f0f); }
.keys svg { width: 30px; height: 32px; }
.keys svg.w { width: 42px; }
.lcd { width: 370px; margin-left: 22px; padding-top: 15px; text-align: center; background: linear-gradient(90deg, rgba(0,0,0,.7), transparent 6%, transparent 96%, rgba(0,0,0,.7)), linear-gradient(#062018, #053228 35%, #0a4a2c 60%, #0a8228); font-family: "DejaVu Sans", sans-serif; }
.tempo { display: flex; justify-content: center; gap: 22px; font-size: 21px; line-height: 26px; color: #c4e2d4; }
.clock { font-size: 36px; font-weight: bold; line-height: 56px; color: #f0fff0; }
.main-meter { flex: 1; margin-left: 22px; padding: 12px 24px; border-left: 3px solid #0c0c0c; }
.meter.big { width: 346px; height: 71px; margin: 0; padding: 7px 4px 6px; background: linear-gradient(90deg, #06280a, #0c3a0c 30%, #4c4a0c 60%, #4c240a 73%, #5a0806 88%, #280505); }
.meter.big input::-webkit-slider-thumb { width: 33px; height: 71px; background: linear-gradient(90deg, #aaa 9px, #e8e8f0 12px, #8c8c9c 16px, #e8e8f0 21px, #999); }

/* bottom tabs */
.tabs { height: 29px; display: flex; gap: 10px; padding: 9px 6px 0 5px; background: #222220; font-size: 16px; }
.tabs button { width: 127px; height: 20px; border-radius: 4px 4px 0 0; background: #8a8a8a; color: #2a2a2a; line-height: 20px; }
.tabs .on { background: #fff; }
.tabs .undock { margin-left: auto; width: 80px; background: #333; color: #ddd; font-weight: bold; }
```
